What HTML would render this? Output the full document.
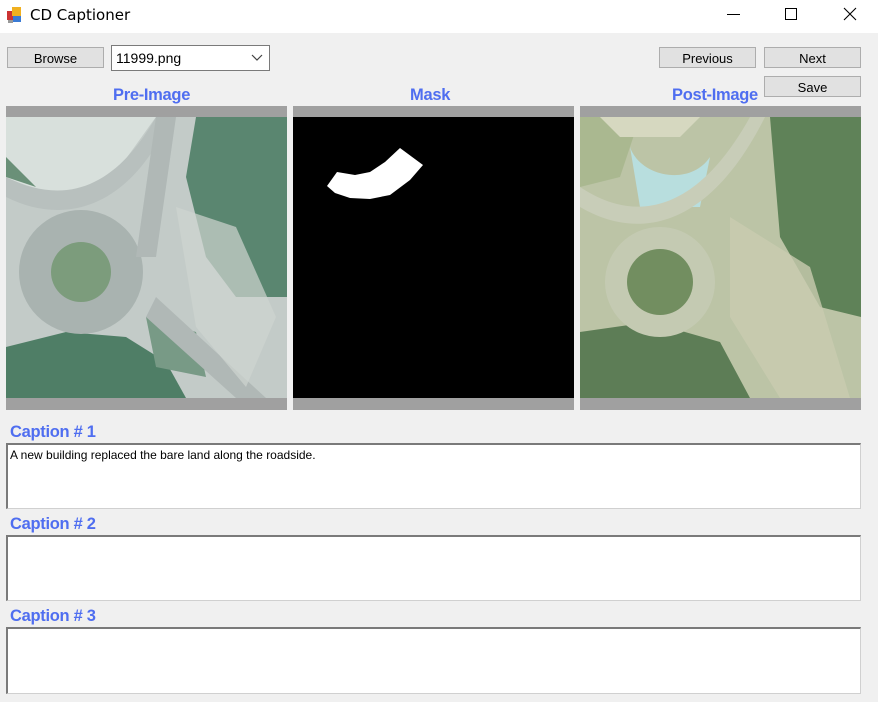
<!DOCTYPE html>
<html><head><style>
body{margin:0;width:878px;height:702px;background:#f0f0f0;font-family:"Liberation Sans",sans-serif;position:relative;overflow:hidden}
.a{position:absolute}
.btn{position:absolute;background:#e1e1e1;border:1px solid #adadad;box-sizing:border-box;font-size:13px;text-align:center;line-height:21px;color:#000}
.lbl{position:absolute;color:#4f6ef0;font-weight:bold;font-size:16.5px;letter-spacing:-0.3px}
.box{position:absolute;left:6px;width:855px;background:#fff;border:1px solid #d0d0d0;border-top:2px solid #7a7a7a;border-left:2px solid #7a7a7a;box-sizing:border-box}
.gb{position:absolute;background:#a0a0a0;width:281px;height:304px}
</style></head><body>
<div class="a" style="left:0;top:0;width:878px;height:33px;background:#fff"></div>
<svg class="a" style="left:6px;top:6px" width="18" height="18" viewBox="0 0 18 18"><rect x="1" y="5" width="7" height="9" fill="#c33"/><rect x="6" y="1" width="9" height="9" fill="#f0b020"/><rect x="7" y="10" width="8" height="6" fill="#3a7bd5"/><rect x="2" y="14" width="5" height="3" fill="#999"/></svg>
<div class="a" style="left:30px;top:6px;font-size:15px;font-family:'DejaVu Sans',sans-serif">CD Captioner</div>
<div class="a" style="left:727px;top:14px;width:13px;height:1px;background:#000"></div>
<div class="a" style="left:785px;top:8px;width:10px;height:10px;border:1px solid #000"></div>
<svg class="a" style="left:843px;top:7px" width="14" height="14"><path d="M1 1L13 13M13 1L1 13" stroke="#000" stroke-width="1.1"/></svg>
<div class="btn" style="left:7px;top:47px;width:97px;height:21px">Browse</div>
<div class="a" style="left:111px;top:45px;width:159px;height:26px;background:#fff;border:1px solid #7a7a7a;box-sizing:border-box;font-size:14px;padding:4px 4px">11999.png</div>
<svg class="a" style="left:251px;top:54px" width="12" height="8"><path d="M1 1L6 6L11 1" fill="none" stroke="#444" stroke-width="1.2"/></svg>
<div class="btn" style="left:659px;top:47px;width:97px;height:21px">Previous</div>
<div class="btn" style="left:764px;top:47px;width:97px;height:21px">Next</div>
<div class="btn" style="left:764px;top:76px;width:97px;height:21px">Save</div>
<div class="lbl" style="left:113px;top:86px">Pre-Image</div>
<div class="lbl" style="left:410px;top:86px">Mask</div>
<div class="lbl" style="left:672px;top:86px">Post-Image</div>
<div class="gb" style="left:6px;top:106px"></div>
<div class="gb" style="left:293px;top:106px"></div>
<div class="gb" style="left:580px;top:106px"></div>
<svg class="a" style="left:6px;top:117px" width="281" height="281" viewBox="0 0 281 281">
<rect width="281" height="281" fill="#c3cbc8"/>
<path d="M0 0H150C120 40 100 80 60 80H0Z" fill="#d8e0dc"/>
<path d="M190 0H281V180H230L200 140L180 60Z" fill="#5a8670"/>
<path d="M0 0V40L30 70L0 60Z" fill="#6a9078"/>
<path d="M0 230L60 215L120 220L160 245L180 281H0Z" fill="#4f7e66"/>
<path d="M140 200L190 215L200 260L150 250Z" fill="#789a86"/>
<circle cx="75" cy="155" r="62" fill="#a9b3b0"/>
<circle cx="75" cy="155" r="30" fill="#7c9c7c"/>
<path d="M0 60C60 90 110 70 150 0L165 0C125 90 60 110 0 80Z" fill="#b8c0be"/>
<path d="M150 0L170 0L150 140L130 140Z" fill="#b0b8b6"/>
<path d="M150 180L260 281H230L140 200Z" fill="#b0b8b6"/>
<path d="M170 90L230 110L270 200L240 270L190 210Z" fill="#cfd4d0" opacity=".7"/>
</svg>
<svg class="a" style="left:293px;top:117px" width="281" height="281"><rect width="281" height="281" fill="#000"/>
<path d="M34 69L44 55L62 58L77 55L92 45L107 31L130 48L117 63L97 78L77 82L57 81L42 76Z" fill="#fff"/></svg>
<svg class="a" style="left:580px;top:117px" width="281" height="281" viewBox="0 0 281 281">
<rect width="281" height="281" fill="#bcc4a6"/>
<path d="M190 0H281V200L240 190L200 120Z" fill="#5f8258"/>
<path d="M0 0H60L40 60L0 70Z" fill="#aab890"/>
<path d="M50 30C60 60 110 70 130 40L120 90L60 90Z" fill="#b8dede"/>
<path d="M0 215L70 205L140 225L170 281H0Z" fill="#5d7d56"/>
<path d="M20 0H120L100 20H40Z" fill="#d6d8c0"/>
<circle cx="80" cy="165" r="55" fill="#c4cab2"/>
<circle cx="80" cy="165" r="33" fill="#728e60"/>
<path d="M0 70C60 110 120 90 170 0L185 0C130 110 60 125 0 90Z" fill="#c8cdb8"/>
<path d="M150 100L230 150L270 281H200L150 200Z" fill="#c9ccb0" opacity=".8"/>
</svg>
<div class="lbl" style="left:10px;top:423px">Caption # 1</div>
<div class="box" style="top:443px;height:66px;font-size:12px;padding:3px 2px">A new building replaced the bare land along the roadside.</div>
<div class="lbl" style="left:10px;top:515px">Caption # 2</div>
<div class="box" style="top:535px;height:66px"></div>
<div class="lbl" style="left:10px;top:607px">Caption # 3</div>
<div class="box" style="top:627px;height:67px"></div>
</body></html>
